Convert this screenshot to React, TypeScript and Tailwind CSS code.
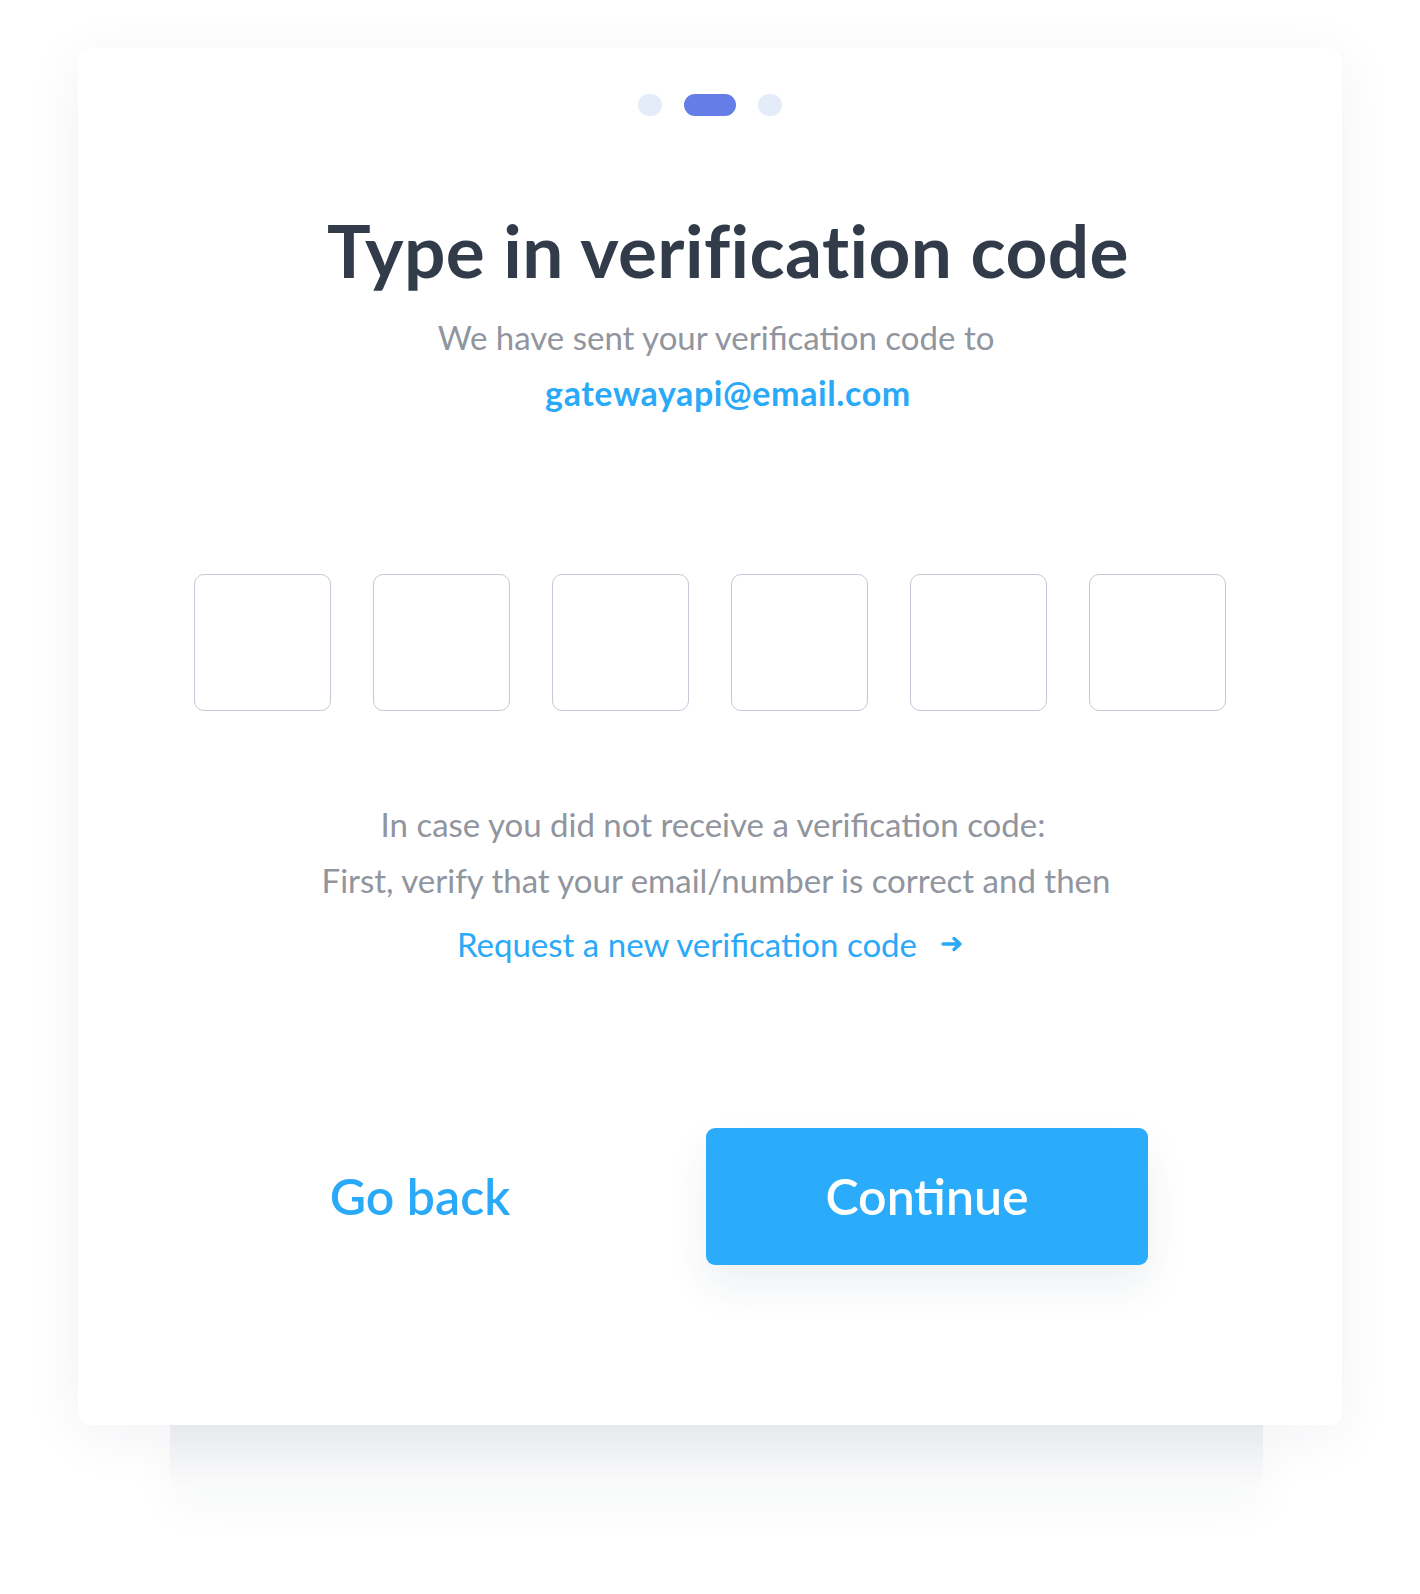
const font = { fontFamily: "Lato, 'Open Sans', sans-serif" };

function Arrow() {
  return (
    <svg width="22" height="16" viewBox="0 0 22 16" fill="none" className="ml-[24px]">
      <path
        d="M2 8h17M13 2.5 19 8l-6 5.5"
        stroke="currentColor"
        strokeWidth="3.4"
        strokeLinecap="round"
        strokeLinejoin="round"
      />
    </svg>
  );
}

export default function App() {
  const boxes = [0, 1, 2, 3, 4, 5];

  return (
    <div className="min-h-[1594px] w-full bg-white px-[78px] pt-[48px]" style={font}>
      {/* Main card */}
      <div className="relative z-10 flex h-[1377px] flex-col items-center rounded-xl bg-white shadow-[0_10px_60px_rgba(30,40,80,0.06)]">
        {/* Steps */}
        <div className="mt-[46px] flex items-center gap-[22px]">
          <span className="h-[22px] w-[24px] rounded-full bg-[#e3ecf8]" />
          <span className="h-[22px] w-[52px] rounded-full bg-[#657de6]" />
          <span className="h-[22px] w-[24px] rounded-full bg-[#e3ecf8]" />
        </div>

        <h1 className="mt-[94px] ml-[36px] text-[73px] font-bold leading-[80px] tracking-[0.4px] text-[#323b4a]">
          Type in verification code
        </h1>
        <p className="mt-[19px] ml-[12px] text-[33px] leading-[56px] text-[#90959e]">
          We have sent your verification code to
        </p>
        <p className="ml-[36px] text-[34px] font-bold leading-[56px] tracking-[0.6px] text-[#29a9f7]">
          gatewayapi@email.com
        </p>

        {/* Code inputs */}
        <div className="mt-[153px] flex gap-[42px]">
          {boxes.map((b) => (
            <input
              key={b}
              maxLength={1}
              className="h-[137px] w-[137px] rounded-[10px] border border-[#c3cad5] bg-white text-center text-[56px] text-[#333c4b] outline-none"
            />
          ))}
        </div>

        <p className="mt-[85px] ml-[6px] text-[33px] leading-[56px] text-[#90959e]">
          In case you did not receive a verification code:
        </p>
        <p className="ml-[12px] text-[33px] leading-[56px] text-[#90959e]">
          First, verify that your email/number is correct and then
        </p>
        <a
          href="#"
          className="mt-[8px] flex items-center text-[33px] leading-[56px] text-[#29a9f7]"
        >
          Request a new verification code
          <Arrow />
        </a>

        {/* Actions */}
        <div className="mt-[156px] flex w-full items-center pl-[121px]">
          <button className="h-[137px] w-[442px] text-[50px] font-semibold text-[#29a9f7]">
            Go back
          </button>
          <button className="ml-[65px] h-[137px] w-[442px] rounded-[9px] bg-[#2aacfa] text-[50px] font-semibold text-white shadow-[0_20px_40px_rgba(30,50,90,0.08)]">
            Continue
          </button>
        </div>
      </div>

      {/* Stacked card behind */}
      <div className="ml-[92px] mr-[79px] h-[60px] rounded-b-xl bg-gradient-to-b from-[#eff1f4] to-[#fafafb] shadow-[0_20px_50px_rgba(30,40,80,0.04)]" />
    </div>
  );
}
